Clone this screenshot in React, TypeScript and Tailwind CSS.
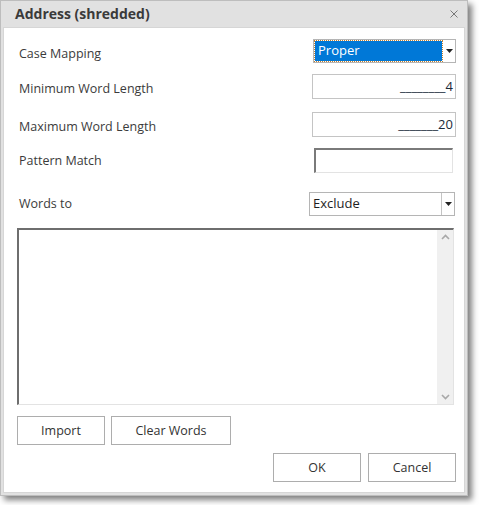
import React from "react";

const font = { fontFamily: '"Open Sans", "Noto Sans", sans-serif' };

function Caret() {
  return (
    <svg width="7" height="4" viewBox="0 0 7 4">
      <path d="M0 0 H7 L3.5 4 Z" fill="#222" />
    </svg>
  );
}

function Row({ label, className, labelClass, children }: { label: string; className: string; labelClass: string; children: React.ReactNode }) {
  return (
    <div className={`flex items-center justify-between ${className}`}>
      <span className={`pl-[15px] text-[12.5px] text-[#3b3b3b] ${labelClass}`}>{label}</span>
      {children}
    </div>
  );
}

function Btn({ label, w }: { label: string; w: string }) {
  return (
    <button className={`${w} h-[29px] pt-[2px] border border-[#adadad] bg-white text-[12.5px] text-[#333]`}>{label}</button>
  );
}

export default function App() {
  return (
    <div className="w-[479px] h-[505px] bg-white" style={font}>
      <div className="w-[468px] h-[496px] border border-[#bdbdbd] bg-[#e1e1e1] flex flex-col shadow-[4px_4px_6px_rgba(0,0,0,0.5)]">
        <div className="h-[26px] flex items-center justify-between pl-[14px] pr-[9px] shrink-0">
          <span className="text-[14px] font-bold text-[#3a3a3a] leading-none">Address (shredded)</span>
          <svg width="8" height="8" viewBox="0 0 8 8">
            <path d="M0.5 0.5 L7.5 7.5 M7.5 0.5 L0.5 7.5" stroke="#777" strokeWidth="1" />
          </svg>
        </div>
        <div className="mx-[2px] mb-[2px] flex-1 bg-white border border-[#d6d6d6] flex flex-col">
          <Row label="Case Mapping" labelClass="pt-[6px]" className="mt-[11px] h-[24px] pr-[8px]">
            <div className="w-[143px] h-[24px] border border-[#b5b5b5] flex bg-white">
              <div className="flex-1 m-[1px] bg-[#0078d7] outline-1 outline-dotted outline-[#c08030] flex items-center pl-[3px]">
                <span className="text-[13px] text-white">Proper</span>
              </div>
              <div className="w-[12px] flex items-center justify-center">
                <Caret />
              </div>
            </div>
          </Row>
          <Row label="Minimum Word Length" labelClass="pt-[5px]" className="mt-[11px] h-[25px] pr-[8px]">
            <div className="w-[144px] h-[25px] border border-[#c4c4c4] flex items-center justify-end pr-[2px]">
              <span className="text-[13px] text-[#1b2a3a]">________4</span>
            </div>
          </Row>
          <Row label="Maximum Word Length" labelClass="pt-[5px]" className="mt-[13px] h-[25px] pr-[8px]">
            <div className="w-[144px] h-[25px] border border-[#c4c4c4] flex items-center justify-end pr-[2px]">
              <span className="text-[13px] text-[#1b2a3a]">_______20</span>
            </div>
          </Row>
          <Row label="Pattern Match" labelClass="pt-[2px]" className="mt-[11px] h-[25px] pr-[11px]">
            <div className="w-[139px] h-[25px] border-t-2 border-l-2 border-[#7a7a7a] border-b border-r border-b-[#e3e3e3] border-r-[#e3e3e3]" />
          </Row>
          <Row label="Words to" labelClass="" className="mt-[19px] h-[24px] pr-[9px]">
            <div className="w-[146px] h-[24px] border border-[#b5b5b5] flex bg-white">
              <div className="flex-1 flex items-center pl-[3px] border-r border-[#c4c4c4]">
                <span className="text-[13px] text-[#1e1e1e]">Exclude</span>
              </div>
              <div className="w-[12px] flex items-center justify-center">
                <Caret />
              </div>
            </div>
          </Row>
          <div className="mt-[12px] ml-[13px] w-[437px] h-[177px] border-t-2 border-l-2 border-[#6e6e6e] border-b border-r border-b-[#e3e3e3] border-r-[#e3e3e3] flex justify-end">
            <div className="w-[16px] bg-[#f0f0f0] flex flex-col items-center justify-between py-[4px]">
              <svg width="9" height="6" viewBox="0 0 9 6">
                <path d="M1 5 L4.5 1.5 L8 5" stroke="#a8a8a8" strokeWidth="1.6" fill="none" />
              </svg>
              <svg width="9" height="6" viewBox="0 0 9 6">
                <path d="M1 1 L4.5 4.5 L8 1" stroke="#a8a8a8" strokeWidth="1.6" fill="none" />
              </svg>
            </div>
          </div>
          <div className="mt-[11px] ml-[13px] flex gap-[6px]">
            <Btn label="Import" w="w-[88px]" />
            <Btn label="Clear Words" w="w-[120px]" />
          </div>
          <div className="mt-[8px] mr-[8px] flex justify-end gap-[7px]">
            <Btn label="OK" w="w-[88px]" />
            <Btn label="Cancel" w="w-[88px]" />
          </div>
        </div>
      </div>
    </div>
  );
}
